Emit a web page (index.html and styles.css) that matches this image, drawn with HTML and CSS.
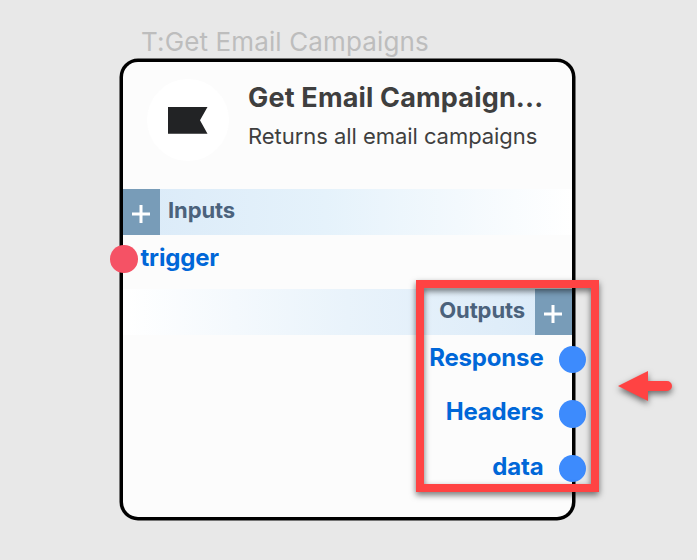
FILE: index.html
```html
<!DOCTYPE html>
<html lang="en">
<head>
<meta charset="utf-8">
<title>Get Email Campaigns</title>
<link rel="stylesheet" href="styles.css">
</head>
<body>
<main class="canvas">
  <div class="node-label"><span>T:Get Email Campaigns</span></div>
  <section class="node">
    <header class="head">
      <div class="logo">
        <svg width="40" height="27" viewBox="0 0 40 27"><path d="M0 0H39.5L32 13.3L39.5 26.8H0Z" fill="#222325"/></svg>
      </div>
      <div class="titles">
        <h1><span>Get Email Campaign...</span></h1>
        <p><span>Returns all email campaigns</span></p>
      </div>
    </header>
    <div class="bar inputs">
      <div class="add"><svg width="18" height="18" viewBox="0 0 18 18"><path d="M9 0V18M0 9H18" stroke="#fff" stroke-width="3"/></svg></div>
      <span class="bar-name">Inputs</span>
    </div>
    <div class="port port-in"><i class="dot"></i><span>trigger</span></div>
    <div class="bar outputs">
      <span class="bar-name">Outputs</span>
      <div class="add"><svg width="18" height="18" viewBox="0 0 18 18"><path d="M9 0V18M0 9H18" stroke="#fff" stroke-width="3"/></svg></div>
    </div>
    <div class="port port-out"><span>Response</span><i class="dot"></i></div>
    <div class="port port-out"><span>Headers</span><i class="dot"></i></div>
    <div class="port port-out"><span>data</span><i class="dot"></i></div>
  </section>
  <div class="highlight"></div>
  <svg class="arrow" width="56" height="32" viewBox="0 0 56 32"><path d="M1 16L31 1V11H50A5 5 0 0 1 50 21H31V31Z" fill="#ff4343"/></svg>
</main>
</body>
</html>
```
FILE: styles.css
```css
* { box-sizing: border-box; }
body { margin: 0; background: #e8e8e8; font-family: Inter, "Liberation Sans", sans-serif; }
.canvas { position: relative; width: 697px; height: 560px; overflow: hidden; padding: 22px 125px 0 123px; }
.node-label { height: 40px; padding-left: 18px; font-size: 26px; line-height: 40px; letter-spacing: .13px; color: #bdbdbd; white-space: nowrap; }
.node { height: 455px; width: 449px; background: #fcfcfc; border-radius: 15px; box-shadow: 0 0 0 3.5px #000; }
.head { display: flex; height: 127px; padding: 17px 0 0 24px; }
.logo { width: 82px; height: 82px; border-radius: 50%; background: #fff; display: flex; align-items: center; justify-content: center; padding-top: 1px; }
.titles { padding-left: 19px; white-space: nowrap; color: #3f3f3f; }
.titles h1 { margin: 0; font-size: 27px; line-height: 38px; font-weight: 700; letter-spacing: .17px; }
.titles p { margin: 0; font-size: 22px; line-height: 38px; letter-spacing: -.05px; }
.bar { display: flex; height: 45.5px; font-size: 22px; font-weight: 700; line-height: 43px; letter-spacing: -.1px; color: #4b627c; }
.inputs { background: linear-gradient(90deg, #daeaf8, #e5f2fb 45%, #fff); }
.outputs { justify-content: flex-end; background: linear-gradient(270deg, #daeaf8, #e9f3fb 50%, #fff); }
.add { width: 37px; height: 45.5px; background: #789cb8; display: flex; align-items: center; justify-content: center; padding: 4px 2px 0 0; }
.inputs .bar-name { margin-left: 8px; }
.outputs .bar-name { margin-right: 10px; }
.port { display: flex; align-items: center; height: 54.5px; font-size: 24px; font-weight: 700; line-height: 40px; letter-spacing: -.18px; color: #0067d8; }
.port span { margin-top: -3px; }
.port-in { margin-left: -13px; padding-bottom: 6px; }
.port-in span { margin-top: -1px; }
.port-out { justify-content: flex-end; margin-right: -14px; padding-bottom: 5px; }
.dot { width: 27.5px; height: 27.5px; border-radius: 50%; background: #3d8bfd; }
.port-in .dot { background: #f55265; margin-right: 3px; }
.port-out .dot { margin-left: 15px; }
.highlight { position: absolute; left: 416px; top: 280px; width: 183px; height: 212px; border: 8px solid #ff4343; filter: drop-shadow(0 3px 3px rgba(0,0,0,.55)); }
.arrow { position: absolute; left: 617px; top: 370px; overflow: visible; filter: drop-shadow(0 3px 3px rgba(0,0,0,.55)); }
```
